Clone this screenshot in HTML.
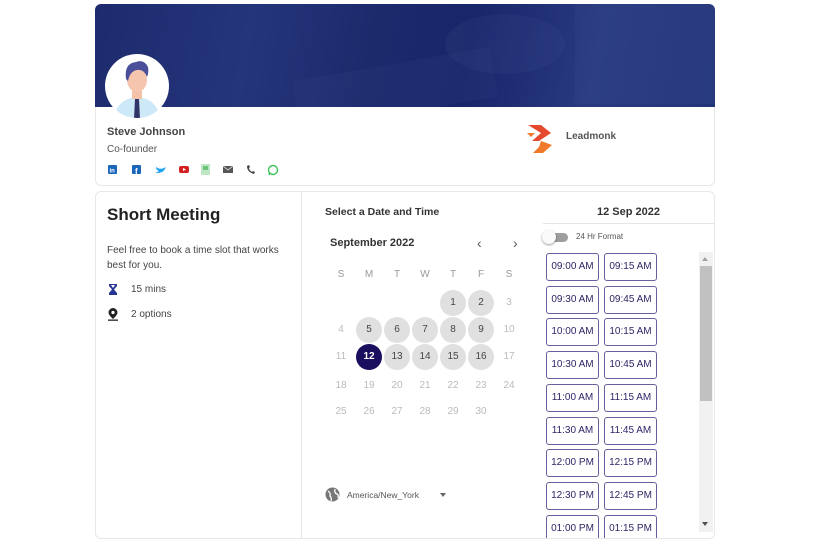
<!DOCTYPE html>
<html><head><meta charset="utf-8"><style>
*{margin:0;padding:0;box-sizing:border-box}
body{width:813px;height:540px;background:#fff;font-family:"Liberation Sans",Arial,sans-serif;position:relative;overflow:hidden;color:#222}
.abs{position:absolute}
.card{position:absolute;left:95px;width:620px;border:1px solid #e8e8e8;border-radius:6px;background:#fff}
.banner{position:absolute;left:95px;top:4px;width:620px;height:103px;border-radius:6px 6px 0 0;background:linear-gradient(100deg,#1d2b6e 0%,#25357a 25%,#1c2a6c 45%,#18266a 60%,#2a3a80 80%,#24347a 100%);overflow:hidden}
.t{position:absolute;white-space:nowrap}
.slot{position:absolute;width:53px;height:28px;border:1.2px solid #6a5f9c;border-radius:3px;font-size:10px;color:#2e2566;text-align:center;line-height:25px;background:#fff}
.d{position:absolute;width:26px;height:26px;margin:-13px 0 0 -13px;border-radius:50%;text-align:center;line-height:26px;font-size:10px;color:#bbb}
.d.a{background:#e0e0e0;color:#444}
.d.s{background:#1a0e5e;color:#fff;font-weight:bold}
</style></head><body>
<div class="card" style="top:4px;height:182px"></div>
<div class="banner">
<div class="abs" style="left:350px;top:10px;width:120px;height:60px;border-radius:50%;background:rgba(60,75,140,.2)"></div>
<div class="abs" style="left:480px;top:0;width:140px;height:100px;background:rgba(70,85,150,.15)"></div>
<div class="abs" style="left:200px;top:60px;width:200px;height:50px;background:rgba(60,75,140,.15);transform:rotate(-10deg)"></div>
</div>
<svg class="abs" style="left:104px;top:53px" width="66" height="66" viewBox="0 0 66 66">
<defs><clipPath id="c"><circle cx="33" cy="33" r="32"/></clipPath></defs>
<circle cx="33" cy="33" r="32" fill="#fff"/>
<g clip-path="url(#c)">
<path d="M10 66 Q12 46 33 44 Q54 46 56 66Z" fill="#cde8f7"/>
<rect x="28" y="36" width="10" height="10" fill="#f4c2a8"/>
<path d="M31 46 L35 46 L36 66 L30 66Z" fill="#2e3566"/>
<ellipse cx="33" cy="27" rx="10" ry="12" fill="#f6c5ad"/>
<path d="M22 26 Q20 10 32 9 Q40 6 44 14 Q45 20 43 24 Q40 16 33 17 Q26 18 24 28Z" fill="#4b4f9a"/>
</g></svg>
<div class="t" style="left:107px;top:126px;font-size:11px;font-weight:bold;color:#444">Steve Johnson</div>
<div class="t" style="left:107px;top:144px;font-size:10px;color:#555">Co-founder</div>
<svg class="abs" style="left:107px;top:164px" width="176" height="12" viewBox="0 0 176 12">
<rect x="1" y="1" width="9" height="9" rx="1" fill="#1a66b8"/><text x="2.5" y="8.5" font-size="6" fill="#fff" font-family="Liberation Sans" font-weight="bold">in</text>
<rect x="25" y="1" width="9" height="9" rx="1" fill="#1a66b8"/><text x="28" y="10" font-size="8" fill="#fff" font-family="Liberation Sans" font-weight="bold">f</text>
<path d="M49 3 Q53 6 57 4 Q59 3 59 2 Q58 8 52 9 Q50 9 48 8 Q51 8 52 7 Q49 6 49 3Z" fill="#1da1f2"/>
<rect x="72" y="2" width="10" height="7" rx="2" fill="#d32020"/><path d="M76 4 L79 5.5 L76 7Z" fill="#fff"/>
<rect x="94" y="0" width="9" height="11" rx="1" fill="#bfe6c4"/><rect x="96" y="2" width="5" height="4" fill="#6cc47a"/>
<rect x="116" y="2" width="10" height="7" fill="#555"/><path d="M116 2 L121 6 L126 2" stroke="#ccc" fill="none"/>
<path d="M140 2 Q140 8 147 10 L148 8 L146 7 L145 8 Q142 6 142 4 L143 3 L142 1Z" fill="#444"/>
<circle cx="166" cy="6" r="4.5" fill="none" stroke="#3bc45a" stroke-width="1.4"/><path d="M162 11 L163 8" stroke="#3bc45a" stroke-width="1.4"/>
</svg>
<svg class="abs" style="left:527px;top:123px" width="28" height="32" viewBox="0 0 28 32">
<path d="M1 2 L14 2 L24 10 L12 18 L5 18 L14 10Z" fill="#e64a2e"/>
<path d="M14 18 L25 22 L16 30 L6 30 L12 24Z" fill="#f07a2c"/>
<path d="M0 10 L8 10 L4 14Z" fill="#f07a2c"/>
</svg>
<div class="t" style="left:566px;top:131px;font-size:10px;font-weight:bold;color:#555">Leadmonk</div>

<div class="card" style="top:191px;height:348px"></div>
<div class="abs" style="left:301px;top:192px;width:1px;height:346px;background:#e6e6e6"></div>
<div class="t" style="left:107px;top:205px;font-size:17px;font-weight:bold;color:#222">Short Meeting</div>
<div class="t" style="left:107px;top:243px;font-size:10px;color:#444;line-height:15px;white-space:normal;width:185px">Feel free to book a time slot that works best for you.</div>
<svg class="abs" style="left:108px;top:283px" width="10" height="13"><path d="M1 1 H9 V3 L6 6.5 L9 10 V12 H1 V10 L4 6.5 L1 3Z" fill="#283593"/><path d="M3 2 H7 L5 5Z" fill="#fff"/></svg>
<div class="t" style="left:131px;top:284px;font-size:10px;color:#444">15 mins</div>
<svg class="abs" style="left:107px;top:307px" width="12" height="14"><path d="M6 1 A4.5 4.5 0 0 1 10.5 5.5 Q10.5 8 6 12 Q1.5 8 1.5 5.5 A4.5 4.5 0 0 1 6 1Z" fill="#222"/><circle cx="6" cy="5.5" r="1.6" fill="#fff"/><rect x="1" y="12.5" width="10" height="1.3" fill="#222"/></svg>
<div class="t" style="left:131px;top:309px;font-size:10px;color:#444">2 options</div>

<div class="t" style="left:325px;top:206px;font-size:10.5px;font-weight:bold;color:#333">Select a Date and Time</div>
<div class="t" style="left:330px;top:237px;font-size:11px;font-weight:bold;color:#333">September 2022</div>
<div class="t" style="left:477px;top:235px;font-size:14px;color:#555">‹</div>
<div class="t" style="left:513px;top:235px;font-size:14px;color:#555">›</div>
<div id="cal"></div>
<svg class="abs" style="left:325px;top:487px" width="15" height="15"><circle cx="7.5" cy="7.5" r="7" fill="#777"/><path d="M3 4 Q6 6 5 9 Q7 11 6 14 M10 2 Q9 6 12 7 Q14 8 13 11" stroke="#fff" stroke-width="1.3" fill="none"/></svg>
<div class="t" style="left:347px;top:490px;font-size:8.5px;color:#555">America/New_York</div>
<div class="abs" style="left:440px;top:493px;border:3.5px solid transparent;border-top:4px solid #666"></div>

<div class="t" style="left:543px;top:206px;width:171px;text-align:center;font-size:11px;font-weight:bold;color:#333">12 Sep 2022</div>
<div class="abs" style="left:543px;top:223px;width:171px;height:1px;background:#e6e6e6"></div>
<div class="abs" style="left:545px;top:233px;width:23px;height:9px;border-radius:5px;background:#9e9e9e"></div>
<div class="abs" style="left:542px;top:230px;width:14px;height:14px;border-radius:50%;background:#fafafa;box-shadow:0 1px 2px rgba(0,0,0,.4)"></div>
<div class="t" style="left:576px;top:232px;font-size:8px;color:#555">24 Hr Format</div>
<div id="slots"></div>
<div class="abs" style="left:699px;top:252px;width:14px;height:280px;background:#f1f1f1"></div>
<div class="abs" style="left:700px;top:266px;width:12px;height:135px;background:#c1c1c1"></div>
<div class="abs" style="left:702px;top:257px;border:3.5px solid transparent;border-bottom:4px solid #a3a3a3;border-top:0"></div>
<div class="abs" style="left:702px;top:522px;border:3.5px solid transparent;border-top:4px solid #505050;border-bottom:0"></div>
<script>
var xs=[341,369,397,425,453,481,509],h='';
"SMTWTFS".split('').forEach(function(c,i){h+='<div class="d" style="left:'+xs[i]+'px;top:275px;color:#999">'+c+'</div>'});
var ys=[303,330,357,386,412],act=[1,2,5,6,7,8,9,13,14,15,16];
for(var d=1;d<=30;d++){var p=d+3,r=Math.floor(p/7),c=p%7;var cl=d==12?'d s':(act.indexOf(d)>=0?'d a':'d');h+='<div class="'+cl+'" style="left:'+xs[c]+'px;top:'+ys[r]+'px">'+d+'</div>'}
document.getElementById('cal').innerHTML=h;
var t=['09:00 AM','09:15 AM','09:30 AM','09:45 AM','10:00 AM','10:15 AM','10:30 AM','10:45 AM','11:00 AM','11:15 AM','11:30 AM','11:45 AM','12:00 PM','12:15 PM','12:30 PM','12:45 PM','01:00 PM','01:15 PM'],s='';
t.forEach(function(v,i){var r=Math.floor(i/2),c=i%2;var top=253+r*32.7;var hh=r==8?(538-top):28;s+='<div class="slot" style="left:'+(c?604:546)+'px;top:'+top+'px;height:'+hh+'px;'+(r==8?'border-bottom:0;border-radius:3px 3px 0 0':'')+'">'+v+'</div>'});
document.getElementById('slots').innerHTML=s;
</script>
</body></html>
